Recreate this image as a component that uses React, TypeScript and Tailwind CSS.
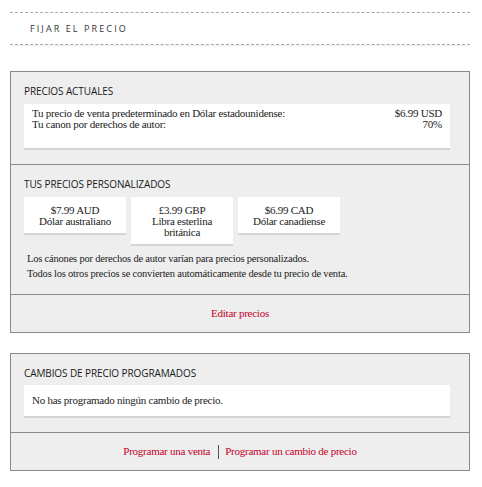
import React from "react";

const serif = "font-['Liberation_Serif',serif]";
const sans = "font-['Open_Sans',sans-serif]";
const head = `text-[10px] leading-[14px] tracking-[-0.1px] text-[#1a1a1a] ${sans}`;

function Card({ price, lines }: { price: string; lines: string[] }) {
  return (
    <div className={`w-[102px] bg-white border-b-2 border-[#d4d4d4] pt-[8px] pb-[6px] text-center text-[11px] tracking-[-0.25px] leading-[11px] text-[#222] ${serif}`}>
      <div>{price}</div>
      {lines.map((l) => (
        <div key={l}>{l}</div>
      ))}
    </div>
  );
}

export default function App() {
  return (
    <div className="w-[482px] h-[487px] bg-white">
      <div className="ml-[10px] w-[460px] pt-[12px]">
        <div className={`h-[33px] border-y border-dashed border-[#a8a8a8] flex items-center pl-[20px] text-[9px] tracking-[2.1px] text-[#333] ${sans} shadow-[0_2px_3px_-2px_rgba(0,0,0,0.15)]`}>
          FIJAR EL PRECIO
        </div>

        <div className="mt-[26px] border border-[#8a8a8a] bg-[#eeeeee]">
          <div className="pl-[13px] pr-[19px] pt-[12px] pb-[14px]">
            <div className={`${head} mb-[6px]`}>PRECIOS ACTUALES</div>
            <div className={`h-[46px] bg-white border-b-2 border-[#d4d4d4] pt-[4px] px-[8px] text-[11px] tracking-[-0.25px] leading-[11px] text-[#222] ${serif}`}>
              <div className="flex justify-between">
                <span>Tu precio de venta predeterminado en Dólar estadounidense:</span>
                <span>$6.99 USD</span>
              </div>
              <div className="flex justify-between">
                <span>Tu canon por derechos de autor:</span>
                <span>70%</span>
              </div>
            </div>
          </div>

          <div className="border-t border-[#8a8a8a] pl-[13px] pr-[19px] pt-[12px] pb-[13px]">
            <div className={`${head} mb-[6px]`}>TUS PRECIOS PERSONALIZADOS</div>
            <div className="flex items-start gap-[5px]">
              <Card price="$7.99 AUD" lines={["Dólar australiano"]} />
              <Card price="£3.99 GBP" lines={["Libra esterlina", "británica"]} />
              <Card price="$6.99 CAD" lines={["Dólar canadiense"]} />
            </div>
            <div className={`mt-[5px] pl-[3px] text-[10.5px] tracking-[-0.2px] leading-[15px] text-[#222] ${serif}`}>
              <div>Los cánones por derechos de autor varían para precios personalizados.</div>
              <div>Todos los otros precios se convierten automáticamente desde tu precio de venta.</div>
            </div>
          </div>

          <div className={`border-t border-[#8a8a8a] h-[38px] flex items-center justify-center text-[11px] tracking-[-0.25px] text-[#c4002b] ${serif}`}>
            <a>Editar precios</a>
          </div>
        </div>

        <div className="mt-[20px] border border-[#8a8a8a] bg-[#eeeeee]">
          <div className="pl-[13px] pr-[19px] pt-[12px] pb-[14px]">
            <div className={`${head} mb-[5px]`}>CAMBIOS DE PRECIO PROGRAMADOS</div>
            <div className={`h-[33px] bg-white border-b-2 border-[#d4d4d4] flex items-center px-[8px] text-[11px] tracking-[-0.25px] text-[#222] ${serif}`}>
              No has programado ningún cambio de precio.
            </div>
          </div>
          <div className={`border-t border-[#8a8a8a] h-[38px] flex items-center justify-center text-[11px] tracking-[-0.25px] text-[#c4002b] ${serif}`}>
            <a>Programar una venta</a>
            <span className="ml-[8px] mr-[6px] h-[14px] w-px bg-[#555]" />
            <a>Programar un cambio de precio</a>
          </div>
        </div>
      </div>
    </div>
  );
}
